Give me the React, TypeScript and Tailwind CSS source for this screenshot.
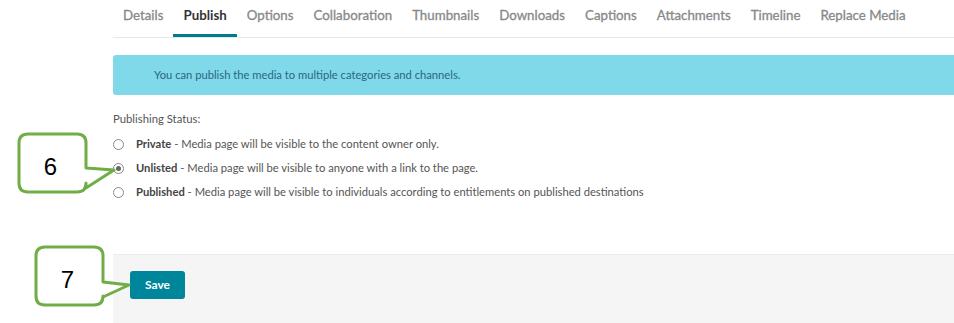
import React from 'react';

const tabs = ['Details', 'Publish', 'Options', 'Collaboration', 'Thumbnails', 'Downloads', 'Captions', 'Attachments', 'Timeline', 'Replace Media'];

const options = [
  { label: 'Private', desc: 'Media page will be visible to the content owner only.', checked: false },
  { label: 'Unlisted', desc: 'Media page will be visible to anyone with a link to the page.', checked: true },
  { label: 'Published', desc: 'Media page will be visible to individuals according to entitlements on published destinations', checked: false },
];

function Callout({ num, className, tipX, tipY, baseTop, baseBottom }: { num: string; className: string; tipX: number; tipY: number; baseTop: number; baseBottom: number }) {
  // box is 67 x 58, drawn with a pointer on the right side
  const w = 67;
  const h = 58;
  const r = 9;
  const d = `M ${r} 0 H ${w - r} Q ${w} 0 ${w} ${r} V ${baseTop} L ${tipX} ${tipY} L ${w} ${baseBottom} V ${h - r} Q ${w} ${h} ${w - r} ${h} H ${r} Q 0 ${h} 0 ${h - r} V ${r} Q 0 0 ${r} 0 Z`;
  return (
    <div className={`absolute ${className}`}>
      <svg width={tipX + 4} height={h + 4} viewBox={`-2 -2 ${tipX + 4} ${h + 4}`} className="overflow-visible">
        <path d={d} fill="white" stroke="#70ad47" strokeWidth="3" strokeLinejoin="round" />
      </svg>
      <div className="absolute left-0 top-[4px] w-[67px] h-[62px] flex items-center justify-center text-[24px] text-black" style={{ fontFamily: '"Liberation Sans", Arial, sans-serif' }}>
        {num}
      </div>
    </div>
  );
}

export default function App() {
  return (
    <div className="relative w-[954px] h-[323px] overflow-hidden bg-white" style={{ fontFamily: 'Lato, "Open Sans", sans-serif' }}>
      <div className="ml-[113px] w-[900px] h-full flex flex-col">
        {/* tabs */}
        <div className="flex border-b border-[#e8e8e8]">
          {tabs.map((t) => (
            <div
              key={t}
              className={`px-[10px] pt-[5px] pb-[9px] leading-[20px] text-[13.3px] border-b-[3px] ${
                t === 'Publish' ? 'border-[#007d8c] text-[#333] font-bold' : 'border-transparent text-[#888] font-normal [-webkit-text-stroke:0.3px_#888]'
              }`}
            >
              {t}
            </div>
          ))}
        </div>

        {/* info */}
        <div className="mt-[17px] h-[40px] bg-[#80d9e8] rounded-l-[3px] pl-[41px] flex items-center text-[11.2px] text-[#2b6585]">
          You can publish the media to multiple categories and channels.
        </div>

        <div className="mt-[16px] text-[11.3px] leading-[16px] text-[#555]">Publishing Status:</div>

        <div className="mt-[9px] flex flex-col gap-[8px]">
          {options.map((o) => (
            <label key={o.label} className="flex items-center h-[16px] text-[11.2px] text-[#555]">
              <span className="w-[11px] h-[11px] rounded-full border border-[#8a8a8a] bg-white flex items-center justify-center">
                {o.checked && <span className="w-[5px] h-[5px] rounded-full bg-[#666]" />}
              </span>
              <span className="ml-[12px]">
                <b className="font-bold text-[#444]">{o.label}</b> - {o.desc}
              </span>
            </label>
          ))}
        </div>

        {/* footer */}
        <div className="mt-auto h-[69px] bg-[#f5f5f5] border-t border-[#ebebeb] pl-[17px] pt-[16px]">
          <button className="w-[55px] h-[28px] rounded-[3px] bg-[#00869a] text-white text-[12px] font-bold">Save</button>
        </div>
      </div>

      <Callout num="6" className="left-[17px] top-[132px]" tipX={95} tipY={36} baseTop={34} baseBottom={54} />
      <Callout num="7" className="left-[34px] top-[245px]" tipX={93} tipY={38} baseTop={35} baseBottom={50} />
    </div>
  );
}
